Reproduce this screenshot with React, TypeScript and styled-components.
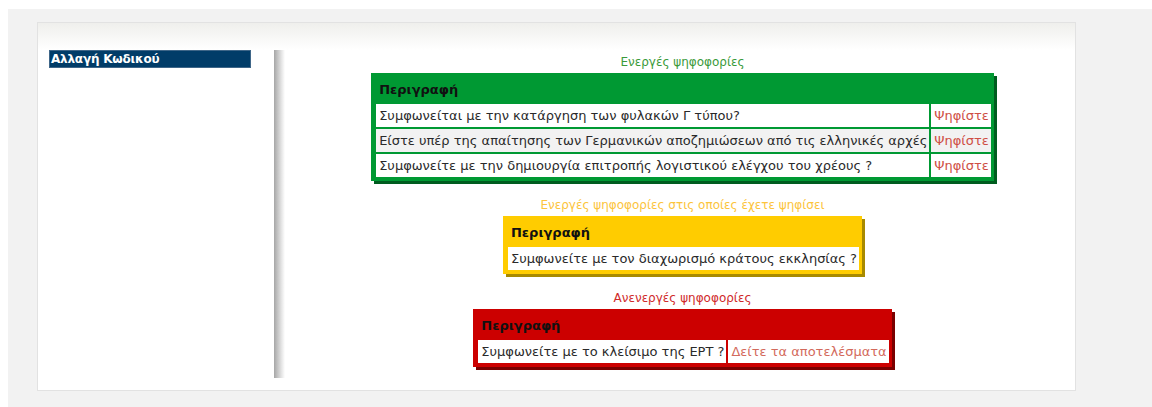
import React from "react";
import styled, {createGlobalStyle} from "styled-components";

const GlobalStyle = createGlobalStyle`
  html, body {
    margin: 0;
    padding: 0;
    background: #ffffff;
  }

  body {
    padding: 9px 0 0 8px;
    font-family: "DejaVu Sans", Verdana, sans-serif;
  }
`;

type Tone = "green" | "yellow" | "red";

const tones: Record<Tone, { bg: string; shade: string; title: string }> = {
    green: {bg: "#009933", shade: "#005c1f", title: "#3a9a3a"},
    yellow: {bg: "#ffcc00", shade: "#a88a00", title: "#fcc43c"},
    red: {bg: "#cc0000", shade: "#7a0000", title: "#d02a2a"},
};

const Page = styled.div`
  background: #f2f2f2;
  padding: 13px 0 16px 29px;
`;

const Panel = styled.div`
  box-sizing: border-box;
  width: 1039px;
  height: 369px;
  background: linear-gradient(to bottom, #efefec 0px, #ffffff 27px);
  border: 1px solid #e2e2e2;
  padding: 27px 0 12px 11px;
  display: flex;
`;

const Sidebar = styled.div`
  width: 225px;
  flex-shrink: 0;
`;

const MenuItem = styled.div`
  box-sizing: border-box;
  width: 202px;
  height: 18px;
  background: #013c68;
  border: 1px solid #3f6688;
  color: #ffffff;
  font-size: 12px;
  font-weight: bold;
  line-height: 16px;
  padding-left: 1px;
  letter-spacing: -0.2px;
`;

const Divider = styled.div`
  width: 11px;
  flex-shrink: 0;
  background: linear-gradient(to right, #a6a6a6, #e6e6e6 70%, #ffffff);
`;

const Main = styled.div`
  flex: 1;
  padding: 5px 0 0 5px;
  display: flex;
  flex-direction: column;
  align-items: center;
`;

const Section = styled.section`
  display: flex;
  flex-direction: column;
  align-items: center;
  margin-bottom: 17px;
`;

const Title = styled.div<{ $tone: Tone }>`
  font-size: 12px;
  line-height: 15px;
  color: ${({$tone}) => tones[$tone].title};
  margin-bottom: 3px;
`;

const VoteTable = styled.table<{ $tone: Tone }>`
  background: ${({$tone}) => tones[$tone].bg};
  box-shadow: 3px 3px 0 ${({$tone}) => tones[$tone].shade};
  border-collapse: separate;
  border-spacing: 2px;
  padding: 0 1px 2px 3px;
  font-size: 13px;
`;

const HeadCell = styled.th`
  text-align: left;
  font-weight: bold;
  color: #111111;
  padding: 7px 3px 5px;
  line-height: 15px;
`;

const Cell = styled.td<{ $alt?: boolean }>`
  background: ${({$alt}) => $alt ? "#f2f2f2" : "#ffffff"};
  color: #2a2a2a;
  padding: 3px 2px 3px 3px;
  line-height: 17px;
  white-space: nowrap;
`;

const LinkCell = styled(Cell)<{ $soft?: boolean }>`
  color: ${({$soft}) => $soft ? "#d36a5c" : "#cf4f45"};
  cursor: pointer;
`;

type Poll = { question: string; link?: string };

const activePolls: Poll[] = [
    {question: "Συμφωνείται με την κατάργηση των φυλακών Γ τύπου?", link: "Ψηφίστε"},
    {question: "Είστε υπέρ της απαίτησης των Γερμανικών αποζημιώσεων από τις ελληνικές αρχές", link: "Ψηφίστε"},
    {question: "Συμφωνείτε με την δημιουργία επιτροπής λογιστικού ελέγχου του χρέους ?", link: "Ψηφίστε"},
];

const votedPolls: Poll[] = [
    {question: "Συμφωνείτε με τον διαχωρισμό κράτους εκκλησίας ?"},
];

const closedPolls: Poll[] = [
    {question: "Συμφωνείτε με το κλείσιμο της ΕΡΤ ?", link: "Δείτε τα αποτελέσματα"},
];

const PollBlock: React.FC<{ title: string; tone: Tone; polls: Poll[] }> = ({title, tone, polls}) => {
    const hasLinks = polls.some(p => p.link);
    return <Section>
        <Title $tone={tone}>{title}</Title>
        <VoteTable $tone={tone}>
            <thead>
            <tr>
                <HeadCell colSpan={hasLinks ? 2 : 1}>Περιγραφή</HeadCell>
            </tr>
            </thead>
            <tbody>
            {polls.map((poll, i) => (
                <tr key={poll.question}>
                    <Cell $alt={i % 2 === 1}>{poll.question}</Cell>
                    {poll.link && <LinkCell $alt={i % 2 === 1} $soft={tone === "red"}>{poll.link}</LinkCell>}
                </tr>
            ))}
            </tbody>
        </VoteTable>
    </Section>
}

const App: React.FC = () => {
    return <>
        <GlobalStyle/>
        <Page>
            <Panel>
                <Sidebar>
                    <MenuItem>Αλλαγή Κωδικού</MenuItem>
                </Sidebar>
                <Divider/>
                <Main>
                    <PollBlock title="Ενεργές ψηφοφορίες" tone="green" polls={activePolls}/>
                    <PollBlock title="Ενεργές ψηφοφορίες στις οποίες έχετε ψηφίσει" tone="yellow" polls={votedPolls}/>
                    <PollBlock title="Ανενεργές ψηφοφορίες" tone="red" polls={closedPolls}/>
                </Main>
            </Panel>
        </Page>
    </>
}

export default App;
